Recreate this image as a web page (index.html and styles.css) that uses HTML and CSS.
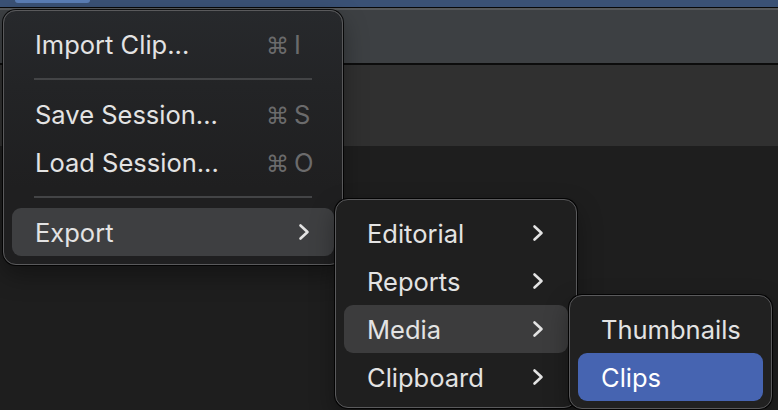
FILE: index.html
```html
<!DOCTYPE html>
<html lang="en">
<head>
    <meta charset="UTF-8">
    <title>File Menu</title>
    <link rel="stylesheet" href="styles.css">
</head>
<body>
    <div class="window">
        <div class="titlebar"><span class="title-btn"></span></div>
        <div class="toolbar"></div>
        <div class="panel"></div>
        <div class="workspace"></div>

        <!-- main file menu -->
        <div class="menu menu-main">
            <div class="item">
                <span class="label">Import Clip...</span>
                <span class="shortcut"><span class="cmd">&#8984;</span>I</span>
            </div>
            <div class="sep"></div>
            <div class="item">
                <span class="label">Save Session...</span>
                <span class="shortcut"><span class="cmd">&#8984;</span>S</span>
            </div>
            <div class="item">
                <span class="label">Load Session...</span>
                <span class="shortcut"><span class="cmd">&#8984;</span>O</span>
            </div>
            <div class="sep"></div>
            <div class="item active">
                <span class="label">Export</span>
                <svg class="chevron" width="12" height="18" viewBox="0 0 12 18"><polyline points="2.5,2.5 9.5,9 2.5,15.5"/></svg>
            </div>
        </div>

        <!-- export submenu -->
        <div class="menu menu-export">
            <div class="item">
                <span class="label">Editorial</span>
                <svg class="chevron" width="12" height="18" viewBox="0 0 12 18"><polyline points="2.5,2.5 9.5,9 2.5,15.5"/></svg>
            </div>
            <div class="item">
                <span class="label">Reports</span>
                <svg class="chevron" width="12" height="18" viewBox="0 0 12 18"><polyline points="2.5,2.5 9.5,9 2.5,15.5"/></svg>
            </div>
            <div class="item active">
                <span class="label">Media</span>
                <svg class="chevron" width="12" height="18" viewBox="0 0 12 18"><polyline points="2.5,2.5 9.5,9 2.5,15.5"/></svg>
            </div>
            <div class="item">
                <span class="label">Clipboard</span>
                <svg class="chevron" width="12" height="18" viewBox="0 0 12 18"><polyline points="2.5,2.5 9.5,9 2.5,15.5"/></svg>
            </div>
        </div>

        <!-- media submenu -->
        <div class="menu menu-media">
            <div class="item">
                <span class="label">Thumbnails</span>
            </div>
            <div class="item selected">
                <span class="label">Clips</span>
            </div>
        </div>
    </div>
</body>
</html>
```

FILE: styles.css
```css
body {
    margin: 0;
    background: #1e1e1e;
    font-family: Inter, "Liberation Sans", sans-serif;
    overflow: hidden;
}
.window {
    position: relative;
    width: 778px;
    height: 410px;
    display: flex;
    flex-direction: column;
}
.titlebar {
    height: 7px;
    background: #3a5175;
    border-bottom: 1px solid #080808;
}
.title-btn {
    display: block;
    width: 75px;
    height: 3px;
    margin-left: 15px;
    background: #5a7db5;
    border-radius: 0 0 8px 8px;
}
.toolbar {
    height: 53px;
    background: #3d4043;
    border-top: 2px solid #56585a;
    border-bottom: 2px solid #0c0c0c;
}
.panel {
    height: 81px;
    background: #303030;
}
.workspace {
    flex: 1;
    background: #1e1e1e;
}

/* menus */
.menu {
    position: absolute;
    box-sizing: border-box;
    border: 1px solid #5a5a5c;
    border-radius: 13px;
    background: #202021;
    box-shadow: 0 0 0 1px rgba(0,0,0,0.85), 0 10px 24px rgba(0,0,0,0.35);
    color: #e3e3e3;
    font-size: 25.5px;
}
.menu-main {
    left: 3px;
    top: 10px;
    width: 340px;
    padding: 9px 8px 8px;
    background: linear-gradient(#27292c 0%, #232426 30%, #1f1f20 70%);
}
.menu-export {
    left: 335px;
    top: 199px;
    width: 242px;
    padding: 9px 8px 6px;
    background: #1f1f1f;
}
.menu-media {
    left: 569px;
    top: 295px;
    width: 203px;
    padding: 9px 8px 7px;
    background: #212121;
}
.item {
    display: flex;
    align-items: center;
    height: 48px;
    padding-left: 23px;
    border-radius: 9px;
}
.item .label {
    flex: 1;
    white-space: nowrap;
}
.item.active {
    background: #3e3f41;
}
.menu-export .item.active {
    background: #3c3c3d;
}
.item.selected {
    background: #4664b1;
    color: #fff;
}
.sep {
    height: 2px;
    margin: 10px 22px 10px;
    background: #434446;
}
.shortcut {
    width: 56px;
    margin-right: 12px;
    color: #6b6b6c;
    white-space: nowrap;
}
.cmd {
    font-family: "DejaVu Sans", sans-serif;
    font-size: 23px;
    margin-right: 5px;
}
.chevron {
    margin-right: 24px;
    fill: none;
    stroke: #e3e3e3;
    stroke-width: 2.6;
    stroke-linecap: round;
    stroke-linejoin: round;
}
```
